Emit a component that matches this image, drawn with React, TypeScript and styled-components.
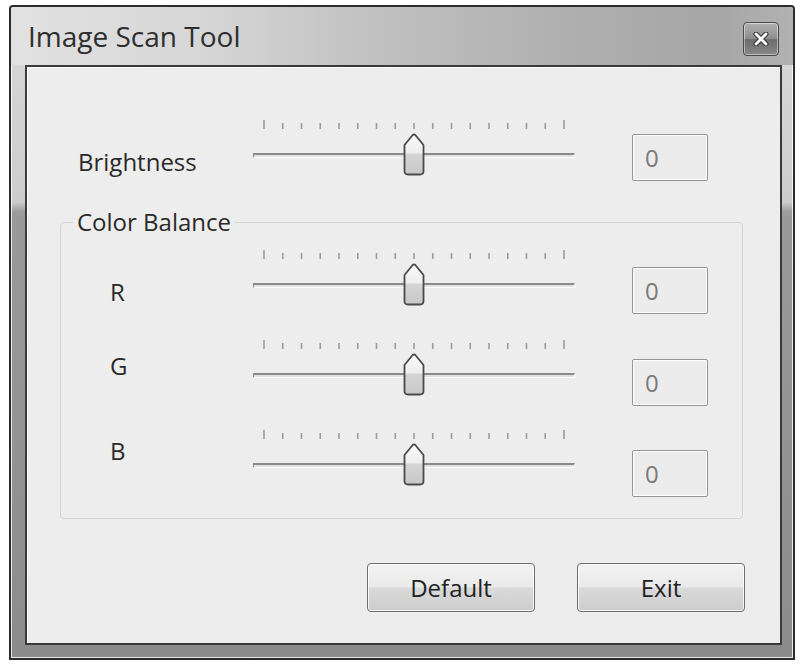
import React from "react";
import styled, { createGlobalStyle } from "styled-components";

const GlobalStyle = createGlobalStyle`
  html, body {
    margin: 0;
    padding: 0;
    background: #ffffff;
  }
  body {
    font-family: "Open Sans", "Noto Sans", "Liberation Sans", sans-serif;
    color: #2e2e2e;
  }
`;

const Page = styled.div`
  box-sizing: border-box;
  width: 804px;
  height: 668px;
  padding: 5px 0 0 9px;
`;

const Window = styled.div`
  box-sizing: border-box;
  width: 786px;
  height: 655px;
  display: flex;
  flex-direction: column;
  padding: 0 11px 13px 14px;
  border: 2px solid #2c2c2c;
  border-radius: 4px 4px 0 0;
  background: linear-gradient(
    180deg,
    #d8d8d8 0,
    #cdcdcd 195px,
    #9a9a9a 205px,
    #8c8c8c 100%
  );
  box-shadow: inset 0 0 0 1px rgba(255, 255, 255, 0.8);
`;

const TitleBar = styled.div`
  height: 58px;
  margin: 0 -11px 0 -14px;
  padding: 0 14px 0 17px;
  display: flex;
  align-items: center;
  justify-content: space-between;
  background: linear-gradient(
    90deg,
    #e2e2e2 0%,
    #d6d6d6 25%,
    #c2c2c2 45%,
    #b0b0b0 70%,
    #a6a6a6 90%,
    #b2b2b2 100%
  );
  border-radius: 3px 3px 0 0;
`;

const Title = styled.div`
  font-size: 28px;
  line-height: 32px;
  color: #2e2e2e;
`;

const CloseButton = styled.button`
  align-self: flex-start;
  margin-top: 15px;
  width: 36px;
  height: 34px;
  padding: 0;
  display: flex;
  align-items: center;
  justify-content: center;
  border: 1px solid #4a4a4a;
  border-radius: 4px;
  background: linear-gradient(180deg, #b0b0b0 0%, #8e8e8e 48%, #6c6c6c 52%, #888888 100%);
  box-shadow: inset 0 0 0 1px rgba(255, 255, 255, 0.45);
`;

const Client = styled.div`
  box-sizing: border-box;
  width: 757px;
  height: 580px;
  padding: 53px 35px 0 33px;
  border: 2px solid #3a3a3a;
  background: #ededed;
  box-shadow: inset 1px 1px 0 #ffffff;
`;

const Row = styled.div<{ $lead: number }>`
  display: grid;
  grid-template-columns: ${(p) => p.$lead}px 322px 57px 76px;
  align-items: start;
  height: 56px;
`;

const Label = styled.div<{ $top: number; $indent: number }>`
  margin-top: ${(p) => p.$top}px;
  padding-left: ${(p) => p.$indent}px;
  font-size: 24px;
  line-height: 30px;
  color: #2a2a2a;
`;

const ValueBox = styled.div<{ $top: number }>`
  grid-column: 4;
  box-sizing: border-box;
  margin-top: ${(p) => p.$top}px;
  width: 76px;
  height: 47px;
  padding-left: 12px;
  display: flex;
  align-items: center;
  border: 1px solid #949494;
  border-radius: 2px;
  background: #ececec;
  box-shadow: inset 0 0 0 1px #ffffff;
  font-size: 24px;
  color: #7a7a7a;
`;

const SliderBox = styled.div`
  position: relative;
  width: 322px;
  height: 56px;
`;

const Ticks = styled.svg`
  position: absolute;
  left: 0;
  top: 0;
`;

const Channel = styled.div`
  position: absolute;
  left: 0;
  right: 0;
  top: 33px;
  box-sizing: border-box;
  height: 5px;
  border-top: 2px solid #8a8a8a;
  border-left: 1px solid #8a8a8a;
  border-bottom: 1px solid #ffffff;
  border-right: 1px solid #ffffff;
  background: #e2e2e2;
`;

const Thumb = styled.svg`
  position: absolute;
  top: 13px;
`;

const Group = styled.fieldset`
  margin: 31px 2px 0 0;
  padding: 13px 0 32px 0;
  min-width: 0;
  border: 1px solid #d4d4d4;
  border-radius: 4px;
  display: flex;
  flex-direction: column;
  gap: 34px;
`;

const Legend = styled.legend`
  margin-left: 12px;
  padding: 0 4px;
  font-size: 24px;
  line-height: 30px;
  color: #2a2a2a;
`;

const ButtonRow = styled.div`
  margin-top: 44px;
  display: flex;
  justify-content: flex-end;
  gap: 42px;
`;

const Button = styled.button`
  width: 168px;
  height: 49px;
  padding: 0;
  border: 1px solid #6e6e6e;
  border-radius: 4px;
  background: linear-gradient(180deg, #f3f3f3 0%, #eaeaea 48%, #dadada 52%, #cccccc 100%);
  box-shadow: inset 0 0 0 1px rgba(255, 255, 255, 0.8);
  font-family: "Open Sans", "Noto Sans", "Liberation Sans", sans-serif;
  font-size: 24px;
  color: #222222;
`;

const MIN = -8;
const MAX = 8;
const TRACK = 322;
const THUMB_W = 22;

const Slider = ({ value }: { value: number }) => {
  const span = TRACK - THUMB_W;
  const count = MAX - MIN;
  const ticks = Array.from({ length: count + 1 }, (_, i) => THUMB_W / 2 + (i * span) / count);
  const left = ((value - MIN) / count) * span;
  return (
    <SliderBox>
      <Ticks width={TRACK} height={10}>
        {ticks.map((x, i) => (
          <line
            key={i}
            x1={x}
            x2={x}
            y1={i === 0 || i === count ? 0 : 3}
            y2={9}
            stroke="#9c9c9c"
            strokeWidth={1.6}
          />
        ))}
      </Ticks>
      <Channel />
      <Thumb width={THUMB_W} height={43} viewBox="0 0 22 43" style={{ left }}>
        <defs>
          <linearGradient id="thumbFill" x1="0" y1="0" x2="0" y2="1">
            <stop offset="0" stopColor="#fbfbfb" />
            <stop offset="0.45" stopColor="#eeeeee" />
            <stop offset="0.5" stopColor="#d4d4d4" />
            <stop offset="1" stopColor="#c8c8c8" />
          </linearGradient>
        </defs>
        <path
          d="M1.5 12 L9.5 2.2 Q11 0.8 12.5 2.2 L20.5 12 L20.5 38 Q20.5 41.5 17 41.5 L5 41.5 Q1.5 41.5 1.5 38 Z"
          fill="url(#thumbFill)"
          stroke="#4a4a4a"
          strokeWidth={1.8}
          strokeLinejoin="round"
        />
      </Thumb>
    </SliderBox>
  );
};

const CloseIcon = () => (
  <svg width="16" height="14" viewBox="0 0 16 14">
    <path d="M3 2 L13 12 M13 2 L3 12" stroke="#3a3a3a" strokeWidth={5} strokeLinecap="round" />
    <path d="M3 2 L13 12 M13 2 L3 12" stroke="#ffffff" strokeWidth={2.8} strokeLinecap="round" />
  </svg>
);

const channels = [
  { name: "R", label: 27, box: 17 },
  { name: "G", label: 11, box: 19 },
  { name: "B", label: 6, box: 20 },
];

export default function App() {
  return (
    <Page>
      <GlobalStyle />
      <Window>
        <TitleBar>
          <Title>Image Scan Tool</Title>
          <CloseButton aria-label="Close">
            <CloseIcon />
          </CloseButton>
        </TitleBar>
        <Client>
          <Row $lead={193}>
            <Label $top={27} $indent={18}>
              Brightness
            </Label>
            <Slider value={0} />
            <ValueBox $top={14}>0</ValueBox>
          </Row>
          <Group>
            <Legend>Color Balance</Legend>
            {channels.map((c) => (
              <Row key={c.name} $lead={192}>
                <Label $top={c.label} $indent={49}>
                  {c.name}
                </Label>
                <Slider value={0} />
                <ValueBox $top={c.box}>0</ValueBox>
              </Row>
            ))}
          </Group>
          <ButtonRow>
            <Button>Default</Button>
            <Button>Exit</Button>
          </ButtonRow>
        </Client>
      </Window>
    </Page>
  );
}
